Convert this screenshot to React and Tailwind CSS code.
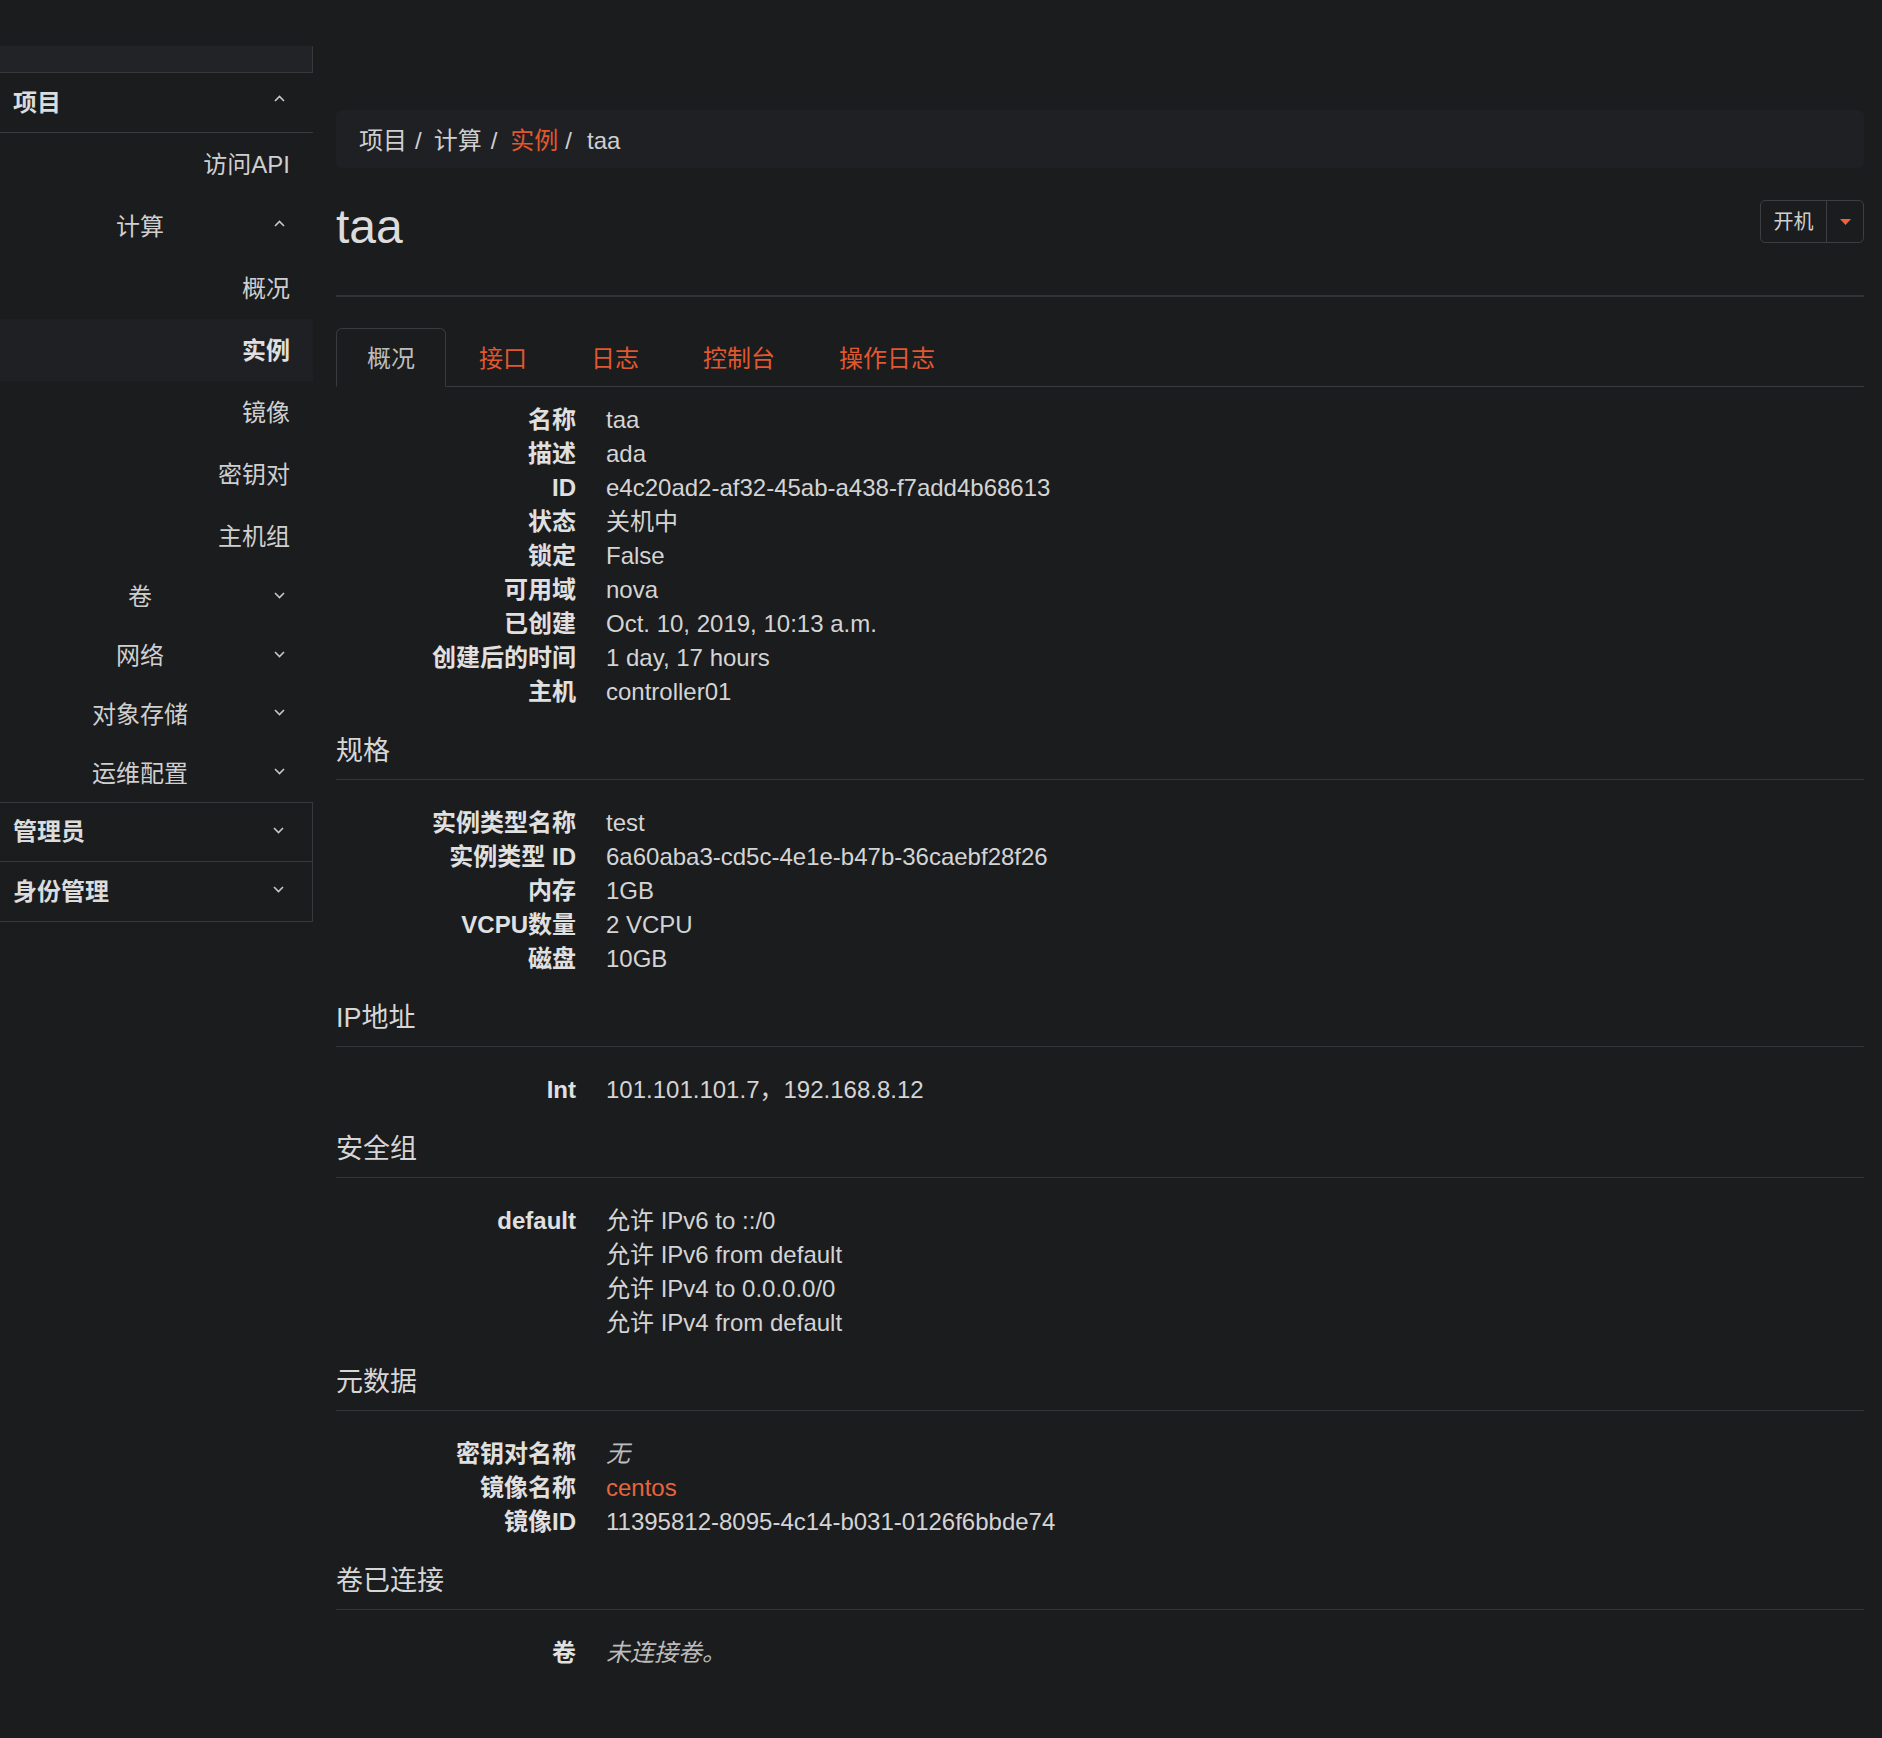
import React from "react";

const FONT = { fontFamily: '"Liberation Sans", "Noto Sans CJK SC", sans-serif' };

function ChevronUp() {
  return (
    <svg width="11" height="7" viewBox="0 0 11 7" className="-mt-[8px] shrink-0">
      <polyline points="1,6 5.5,1.5 10,6" fill="none" stroke="#c8c8c8" strokeWidth="1.6" />
    </svg>
  );
}

function ChevronDown() {
  return (
    <svg width="11" height="7" viewBox="0 0 11 7" className="-mt-[4px] shrink-0">
      <polyline points="1,1 5.5,5.5 10,1" fill="none" stroke="#c8c8c8" strokeWidth="1.6" />
    </svg>
  );
}

const leafItems = [
  { label: "访问API" },
  { group: "计算", open: true },
  { label: "概况" },
  { label: "实例", active: true },
  { label: "镜像" },
  { label: "密钥对" },
  { label: "主机组" },
];

const groups = ["卷", "网络", "对象存储", "运维配置"];

function Sidebar() {
  return (
    <div className="w-[313px] shrink-0 text-[24px] text-[#cfcfcf]">
      <div className="mt-[46px] h-[27px] bg-[#222326] border-b border-r border-[#37383b]" />
      <div className="h-[60px] flex items-center justify-between pl-[13px] pr-[28px] border-b border-[#3a3b3e] font-bold text-[#dcdcdc]">
        <span>项目</span>
        <ChevronUp />
      </div>
      {leafItems.map((it, i) =>
        it.group ? (
          <div key={i} className="h-[62px] pt-[2px] flex items-center">
            <span className="w-[274px] pl-[6px] text-center">{it.group}</span>
            <ChevronUp />
          </div>
        ) : (
          <div
            key={i}
            className={`h-[62px] pt-[2px] flex items-center justify-end pr-[23px] ${it.active ? "bg-[#1f2023] font-bold text-[#e0e0e0]" : ""}`}
          >
            {it.label}
          </div>
        )
      )}
      {groups.map((g) => (
        <div key={g} className="h-[58.75px] pt-[2px] flex items-center">
          <span className="w-[274px] pl-[6px] text-center">{g}</span>
          <ChevronDown />
        </div>
      ))}
      <div className="h-[60px] flex items-center justify-between pl-[13px] pr-[28px] border-t border-b border-r border-[#38393c] font-bold text-[#dcdcdc]">
        <span>管理员</span>
        <ChevronDown />
      </div>
      <div className="h-[60px] flex items-center justify-between pl-[13px] pr-[28px] border-b border-r border-[#38393c] font-bold text-[#dcdcdc]">
        <span>身份管理</span>
        <ChevronDown />
      </div>
    </div>
  );
}

function Row({ label, children }) {
  return (
    <div className="grid grid-cols-[240px_1fr] gap-x-[30px] leading-[34px]">
      <div className="text-right font-bold text-[#e0e0e0] whitespace-nowrap">{label}</div>
      <div className="text-[#d4d4d4]">{children}</div>
    </div>
  );
}

function Section({ title, children }) {
  return (
    <>
      <div className="mt-[27px] text-[27px] leading-[30px] pb-[13px] border-b border-[#333538] text-[#d6d6d6]">
        {title}
      </div>
      <div className="mt-[26px]">{children}</div>
    </>
  );
}

const tabs = ["概况", "接口", "日志", "控制台", "操作日志"];

export default function App() {
  return (
    <div className="min-h-[1738px] bg-[#1b1c1e] flex" style={FONT}>
      <Sidebar />
      <div className="flex-1 pl-[23px] pr-[18px] text-[24px]">
        {/* Breadcrumb */}
        <div className="mt-[110px] h-[58px] pt-[4px] rounded-[6px] bg-[#1f2023] flex items-center pl-[23px] text-[#cfcfcf]">
          <span>项目</span>
          <span className="ml-[8px] mr-[12px]">/</span>
          <span>计算</span>
          <span className="ml-[9px] mr-[13px]">/</span>
          <span className="text-[#e0582e]">实例</span>
          <span className="ml-[7px] mr-[15px]">/</span>
          <span>taa</span>
        </div>

        {/* Title */}
        <div className="mt-[32px] flex items-start justify-between pb-[42px] border-b-2 border-[#323336]">
          <h1 className="text-[48px] leading-[53px] text-[#dcdcdc]">taa</h1>
          <div className="flex h-[43px] border border-[#3d3e41] rounded-[5px]">
            <button className="w-[66px] text-[20px] text-[#cfcfcf] border-r border-[#3d3e41]">开机</button>
            <button className="w-[36px] flex items-center justify-center">
              <svg width="11" height="6" viewBox="0 0 11 6">
                <polygon points="0,0 11,0 5.5,6" fill="#f0603a" />
              </svg>
            </button>
          </div>
        </div>

        {/* Tabs */}
        <div className="mt-[31px] flex border-b border-[#3a3b3e]">
          {tabs.map((t, i) => (
            <div
              key={t}
              className={`h-[59px] pt-[2px] px-[30px] mr-[2px] -mb-[1px] flex items-center border rounded-t-[6px] ${
                i === 0 ? "border-[#3a3b3e] border-b-[#1b1c1e] bg-[#1b1c1e] text-[#bdbdbd]" : "border-transparent text-[#e0582e]"
              }`}
            >
              {t}
            </div>
          ))}
        </div>

        {/* Overview */}
        <div className="pt-[16px]">
          <Row label="名称">taa</Row>
          <Row label="描述">ada</Row>
          <Row label="ID">e4c20ad2-af32-45ab-a438-f7add4b68613</Row>
          <Row label="状态">关机中</Row>
          <Row label="锁定">False</Row>
          <Row label="可用域">nova</Row>
          <Row label="已创建">Oct. 10, 2019, 10:13 a.m.</Row>
          <Row label="创建后的时间">1 day, 17 hours</Row>
          <Row label="主机">controller01</Row>
        </div>

        <Section title="规格">
          <Row label="实例类型名称">test</Row>
          <Row label="实例类型 ID">6a60aba3-cd5c-4e1e-b47b-36caebf28f26</Row>
          <Row label="内存">1GB</Row>
          <Row label="VCPU数量">2 VCPU</Row>
          <Row label="磁盘">10GB</Row>
        </Section>

        <Section title="IP地址">
          <Row label="Int">101.101.101.7，192.168.8.12</Row>
        </Section>

        <Section title="安全组">
          <Row label="default">
            <div>允许 IPv6 to ::/0</div>
            <div>允许 IPv6 from default</div>
            <div>允许 IPv4 to 0.0.0.0/0</div>
            <div>允许 IPv4 from default</div>
          </Row>
        </Section>

        <Section title="元数据">
          <Row label="密钥对名称">
            <em className="text-[#bdbdbd]">无</em>
          </Row>
          <Row label="镜像名称">
            <span className="text-[#e8643a]">centos</span>
          </Row>
          <Row label="镜像ID">11395812-8095-4c14-b031-0126f6bbde74</Row>
        </Section>

        <Section title="卷已连接">
          <Row label="卷">
            <em className="text-[#bdbdbd]">未连接卷。</em>
          </Row>
        </Section>
      </div>
    </div>
  );
}
